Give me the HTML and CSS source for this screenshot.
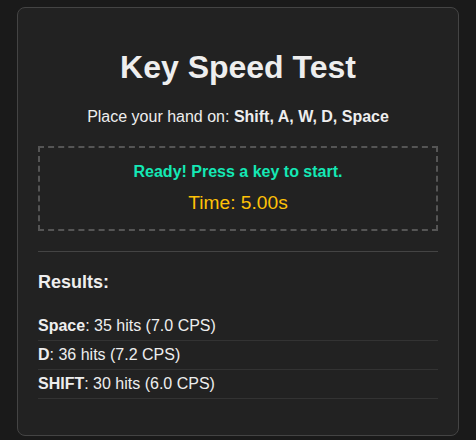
FILE: index.html
```html
<!DOCTYPE html>
<html>
<head>
<title>Key Speed Test</title>
<meta name=viewport content="width=device-width, initial-scale=1">
<link rel="stylesheet" href="styles.css">
</head>
<body>

<div class=card>
 <h1>Key Speed Test</h1>
 <p class=hint>Place your hand on: <b>Shift, A, W, D, Space</b></p>

 <div class=arena>
  <div class=status>Ready! Press a key to start.</div>
  <div class=timer>Time: 5.00s</div>
 </div>

 <hr>

 <h3>Results:</h3>
 <ul class=results>
  <li><b>Space</b>: 35 hits (7.0 CPS)</li>
  <li><b>D</b>: 36 hits (7.2 CPS)</li>
  <li><b>SHIFT</b>: 30 hits (6.0 CPS)</li>
 </ul>
</div>

</body>
</html>
```

FILE: styles.css
```css
body {
 margin:0;
 padding:7px 0;
 color:#eee;
 background-color:#1a1a1a;
 font-family:"Liberation Sans",Arial,Helvetica,sans-serif;
}
.card {
 width:400px;
 margin:0 auto;
 padding:20px;
 background-color:#222;
 border:1px solid #444;
 border-radius:8px;
}
h1 {
 text-align:center;
 font-size:32px;
}
.hint {
 text-align:center;
 margin:0 0 20px;
}
.arena {
 border:2px dashed #555;
 padding:15px;
 text-align:center;
}
.status {
 color:#14e8b5;
 font-weight:bold;
 margin-bottom:11px;
}
.timer {
 color:#ffc107;
 font-size:1.2em;
}
hr {
 border:none;
 border-top:1px solid #444;
 margin:20px 0;
}
h3 {
 font-size:18px;
 margin:18px 0 19px;
}
.results {
 list-style:none;
 padding:0;
 margin:0 0 16px;
}
.results li {
 padding:5px 0;
 border-bottom:1px solid #333;
}
```
